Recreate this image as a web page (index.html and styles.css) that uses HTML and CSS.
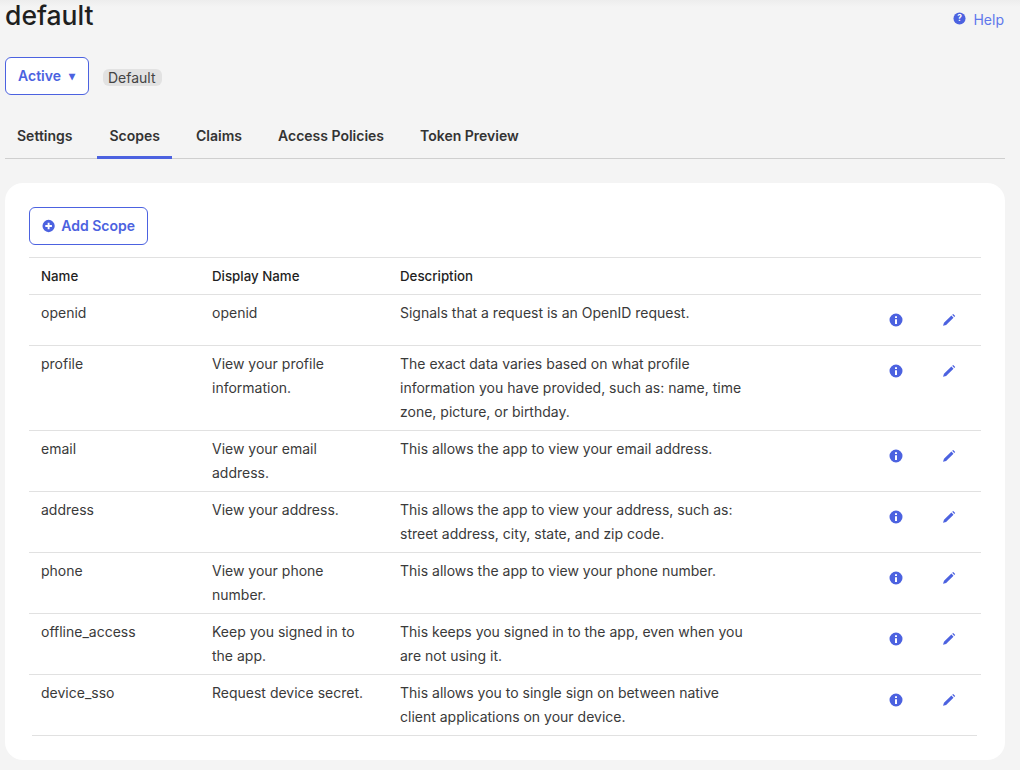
FILE: index.html
```html
<!DOCTYPE html>
<html>
<head>
<title>default</title>
<link rel="stylesheet" href="styles.css">
</head>

<body>

<svg class="defs" width="0" height="0">
<symbol id="iconInfo" viewBox="0 0 14 14">
<path fill-rule="evenodd" d="M7 .5a6.5 6.5 0 1 0 0 13 6.500 6.500 0 0 0 0-13zM6 3.200h2v1.900H6zM6 6.200h2v4.700H6z"/>
</symbol>
<symbol id="iconEdit" viewBox="0 0 14 14">
<path d="M1 12.800l1-3 7.400-7.200 2.100 2.100-7.400 7.200zM10.200 1.800l1-.9 2 2-.9 1z"/>
</symbol>
</svg>

<div class="pageHeader">
<h1 class="pageTitle">default</h1>
<a class="helpLink">
<svg class="helpIcon" viewBox="0 0 14 14"><circle cx="7" cy="7" r="6.500"/><text x="7" y="10" class="helpMark">?</text></svg>
Help
</a>
</div>

<div class="statusRow">
<button class="btn activeBtn">Active <span class="caret">&#9662;</span></button>
<span class="badge">Default</span>
</div>

<ul class="tabs">
<li class="tab">Settings</li>
<li class="tab active">Scopes</li>
<li class="tab">Claims</li>
<li class="tab">Access Policies</li>
<li class="tab">Token Preview</li>
</ul>

<div class="card">
<button class="btn addBtn">
<svg class="addIcon" viewBox="0 0 14 14"><path fill-rule="evenodd" d="M7 .5a6.500 6.500 0 1 0 0 13 6.500 6.500 0 0 0 0-13zM6 3.500h2V6h2.500v2H8v2.500H6V8H3.500V6H6z"/></svg>
Add Scope
</button>

<table class="scopes">
<colgroup>
<col class="colName">
<col class="colDisplay">
<col class="colDesc">
<col class="colInfo">
<col class="colEdit">
</colgroup>
<thead>
<tr><th>Name</th><th>Display Name</th><th>Description</th><th></th><th></th></tr>
</thead>
<tbody>
<tr>
<td>openid</td>
<td><div class="display">openid</div></td>
<td><div class="desc">Signals that a request is an OpenID request.</div></td>
<td class="act"><span class="iconBtn"><svg class="icon"><use href="#iconInfo"/></svg></span></td>
<td class="act"><span class="iconBtn"><svg class="icon"><use href="#iconEdit"/></svg></span></td>
</tr>
<tr>
<td>profile</td>
<td><div class="display">View your profile information.</div></td>
<td><div class="desc">The exact data varies based on what profile information you have provided, such as: name, time zone, picture, or birthday.</div></td>
<td class="act"><span class="iconBtn"><svg class="icon"><use href="#iconInfo"/></svg></span></td>
<td class="act"><span class="iconBtn"><svg class="icon"><use href="#iconEdit"/></svg></span></td>
</tr>
<tr>
<td>email</td>
<td><div class="display">View your email address.</div></td>
<td><div class="desc">This allows the app to view your email address.</div></td>
<td class="act"><span class="iconBtn"><svg class="icon"><use href="#iconInfo"/></svg></span></td>
<td class="act"><span class="iconBtn"><svg class="icon"><use href="#iconEdit"/></svg></span></td>
</tr>
<tr>
<td>address</td>
<td><div class="display">View your address.</div></td>
<td><div class="desc">This allows the app to view your address, such as: street address, city, state, and zip code.</div></td>
<td class="act"><span class="iconBtn"><svg class="icon"><use href="#iconInfo"/></svg></span></td>
<td class="act"><span class="iconBtn"><svg class="icon"><use href="#iconEdit"/></svg></span></td>
</tr>
<tr>
<td>phone</td>
<td><div class="display">View your phone number.</div></td>
<td><div class="desc">This allows the app to view your phone number.</div></td>
<td class="act"><span class="iconBtn"><svg class="icon"><use href="#iconInfo"/></svg></span></td>
<td class="act"><span class="iconBtn"><svg class="icon"><use href="#iconEdit"/></svg></span></td>
</tr>
<tr>
<td>offline_access</td>
<td><div class="display">Keep you signed in to the app.</div></td>
<td><div class="desc">This keeps you signed in to the app, even when you are not using it.</div></td>
<td class="act"><span class="iconBtn"><svg class="icon"><use href="#iconInfo"/></svg></span></td>
<td class="act"><span class="iconBtn"><svg class="icon"><use href="#iconEdit"/></svg></span></td>
</tr>
<tr class="lastRow">
<td>device_sso</td>
<td><div class="display">Request device secret.</div></td>
<td><div class="desc">This allows you to single sign on between native client applications on your device.</div></td>
<td class="act"><span class="iconBtn"><svg class="icon"><use href="#iconInfo"/></svg></span></td>
<td class="act"><span class="iconBtn"><svg class="icon"><use href="#iconEdit"/></svg></span></td>
</tr>
</tbody>
</table>
<div class="tableEnd"></div>
</div>

</body>
</html>
```

FILE: styles.css
```css
html {
    height: 100%;
}
body {
    margin: 0;
    padding: 0 15px 0 5px;
    height: 770px;
    box-sizing: border-box;
    overflow: hidden;
    font: 14px/24px Inter, "Liberation Sans", sans-serif;
    color: #3a3a3a;
    background: linear-gradient(#ededed, #f4f4f4 7px);
}
.defs {
    position: absolute;
}
.pageHeader {
    display: flex;
    justify-content: space-between;
    height: 57px;
}
.pageTitle {
    margin: 0;
    font-size: 26.5px;
    line-height: 30px;
    font-weight: 500;
    color: #1f1f1f;
}
.helpLink {
    display: flex;
    align-items: center;
    gap: 7px;
    height: 39px;
    margin-right: 1px;
    font-size: 14px;
    color: #5f78ec;
}
.helpIcon {
    width: 13px;
    height: 13px;
    margin-top: -3px;
    fill: #4c62e0;
}
.helpMark {
    font: bold 9px Inter, sans-serif;
    fill: #fff;
    text-anchor: middle;
}
.statusRow {
    display: flex;
    align-items: center;
    gap: 14px;
    height: 38px;
}
.btn {
    display: inline-flex;
    align-items: center;
    height: 38px;
    padding: 0 12px 1px;
    box-sizing: border-box;
    background: #fff;
    border: 1px solid #4c62e0;
    border-radius: 6px;
    font: 600 14px Inter, sans-serif;
    color: #4c62e0;
    white-space: nowrap;
}
.activeBtn {
    padding-right: 13px;
}
.caret {
    margin-left: 8px;
    font-size: 12px;
}
.badge {
    margin-top: 2px;
    padding: 0 6px 0 5px;
    height: 17px;
    line-height: 18px;
    background: #e2e2e2;
    border-radius: 6px;
    font-size: 14px;
    color: #444;
}
.tabs {
    display: flex;
    gap: 12px;
    list-style: none;
    margin: 16px 0 0;
    padding: 0;
    height: 48px;
    box-sizing: border-box;
    border-bottom: 1px solid #cfcfcf;
}
.tab {
    padding: 13px 12px 0;
    height: 48px;
    box-sizing: border-box;
    font-weight: 600;
    color: #333;
}
.tab.active {
    padding-left: 13px;
    border-bottom: 3px solid #4c62e0;
}
.card {
    margin-top: 24px;
    padding: 24px;
    height: 577px;
    box-sizing: border-box;
    background: #fff;
    border-radius: 18px;
}
.addBtn {
    gap: 6px;
    width: 119px;
}
.addIcon {
    width: 14px;
    height: 14px;
    fill: #4c62e0;
}
.scopes {
    width: 100%;
    margin-top: 12px;
    table-layout: fixed;
    border-collapse: collapse;
}
.colName {
    width: 171px;
}
.colDisplay {
    width: 188px;
}
.colInfo {
    width: 42px;
}
.colEdit {
    width: 64px;
}
.scopes th {
    padding: 6px 12px;
    text-align: left;
    font-size: 13.3px;
    font-weight: 500;
    color: #1f1f1f;
    border-top: 1px solid #e1e1e1;
    border-bottom: 1px solid #e1e1e1;
}
.scopes td {
    padding: 6px 12px;
    vertical-align: top;
    border-bottom: 1px solid #e1e1e1;
}
.scopes .lastRow td {
    border-bottom: none;
}
.display {
    max-width: 160px;
}
.desc {
    max-width: 350px;
}
.scopes td.act {
    padding: 6px 0;
    text-align: center;
}
.iconBtn {
    display: flex;
    align-items: center;
    justify-content: center;
    height: 38px;
}
.icon {
    width: 14px;
    height: 14px;
    fill: #4c62e0;
}
.tableEnd {
    margin: 0 4px 0 3px;
    height: 1px;
    background: #e1e1e1;
}
```
